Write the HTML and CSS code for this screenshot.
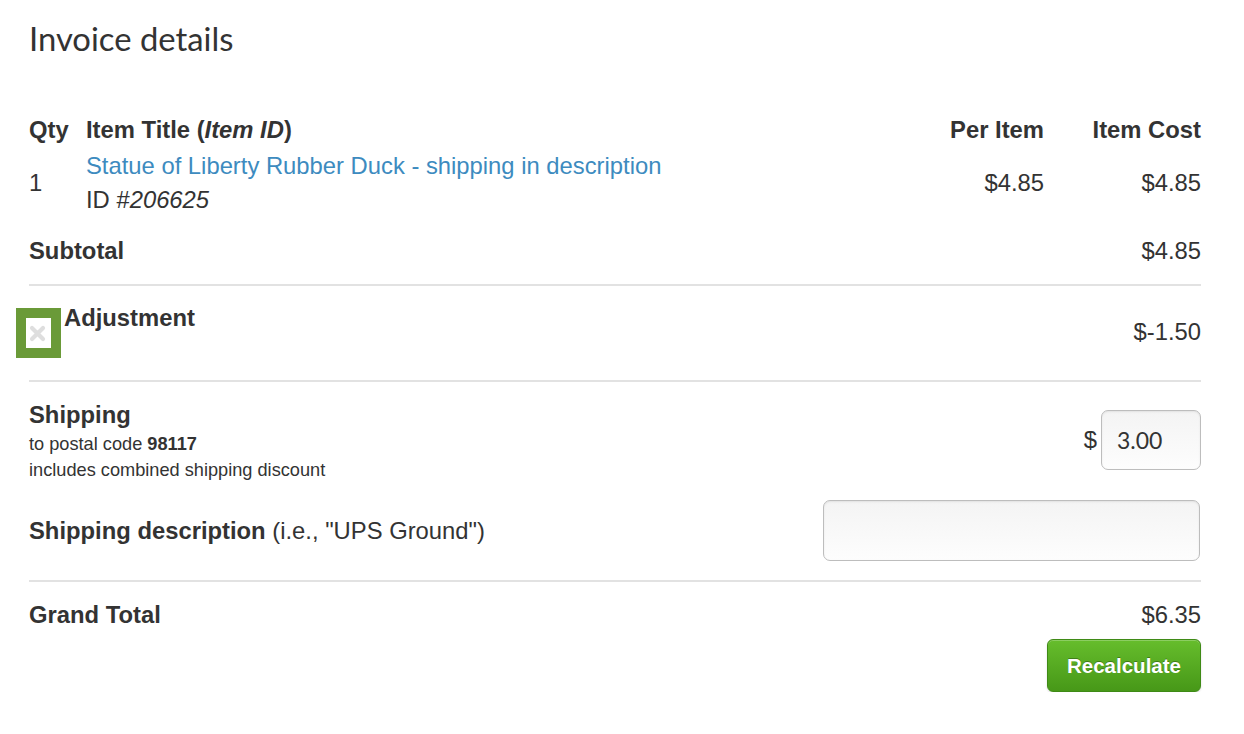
FILE: index.html
```html
<!DOCTYPE html>
<html lang="en">
<head>
<meta charset="utf-8">
<title>Invoice details</title>
<link rel="stylesheet" href="styles.css">
</head>
<body>
<main class="invoice">
  <h1 class="invoice-title">Invoice details</h1>

  <div class="items">
    <div class="cell head">Qty</div>
    <div class="cell head">Item Title (<em>Item ID</em>)</div>
    <div class="cell head num">Per Item</div>
    <div class="cell head num">Item Cost</div>

    <div class="cell line qty">1</div>
    <div class="cell line title">
      <a class="item-link" href="#">Statue of Liberty Rubber Duck - shipping in description</a>
      <div class="item-id">ID #<em>206625</em></div>
    </div>
    <div class="cell line num mid">$4.85</div>
    <div class="cell line num mid">$4.85</div>
  </div>

  <div class="section subtotal">
    <div class="label">Subtotal</div>
    <div class="amount">$4.85</div>
  </div>

  <div class="section adjustment">
    <button class="remove" type="button" aria-label="Remove adjustment">
      <svg width="17" height="17" viewBox="0 0 17 17"><path d="M3 3 L14 14 M14 3 L3 14" stroke="#dedede" stroke-width="4.2" stroke-linecap="round"/></svg>
    </button>
    <div class="label">Adjustment</div>
    <div class="amount adj-amount">$-1.50</div>
  </div>

  <div class="section shipping">
    <div class="ship-row">
      <div class="ship-info">
        <div class="label ship-label">Shipping</div>
        <div class="small">to postal code <strong>98117</strong></div>
        <div class="small">includes combined shipping discount</div>
      </div>
      <div class="ship-cost">
        <span class="currency">$</span>
        <input class="field cost-field" type="text" value="3.00">
      </div>
    </div>
    <div class="desc-row">
      <div><span class="label">Shipping description</span> (i.e., "UPS Ground")</div>
      <input class="field desc-field" type="text">
    </div>
  </div>

  <div class="total">
    <div class="label">Grand Total</div>
    <div class="total-side">
      <div class="amount">$6.35</div>
      <button class="recalc" type="button">Recalculate</button>
    </div>
  </div>
</main>
</body>
</html>
```

FILE: styles.css
```css
html, body {
  margin: 0;
  padding: 0;
  background: #fff;
}

body {
  font-family: "Liberation Sans", Arial, sans-serif;
  font-size: 23.8px;
  line-height: 34px;
  color: #333;
}

.invoice {
  width: 1172px;
  margin-left: 29px;
}

.invoice-title {
  font-family: Lato, "Open Sans", sans-serif;
  font-weight: 400;
  font-size: 32.8px;
  line-height: 40px;
  margin: 19px 0 0;
  color: #333;
}

/* line items */
.items {
  display: grid;
  grid-template-columns: 57px 1fr 160px 157px;
  margin-top: 54px;
}

.cell.head {
  font-weight: 700;
}

.cell.head em {
  font-style: italic;
}

.cell.line {
  padding-top: 2px;
}

.num {
  text-align: right;
}

.qty, .mid {
  align-self: center;
}

.mid {
  margin-top: -1px;
}

.item-link {
  color: #3d8bbf;
  text-decoration: none;
}

.item-id em {
  font-style: italic;
}

/* totals sections */
.section {
  border-bottom: 2px solid #e2e2e2;
}

.label {
  font-weight: 700;
}

.subtotal {
  display: flex;
  justify-content: space-between;
  padding: 17px 0 16px;
}

.adjustment {
  display: flex;
  align-items: flex-start;
  padding: 15px 0 22px;
}

.remove {
  box-sizing: content-box;
  width: 25px;
  height: 30px;
  margin: 7px 3px 0 -13px;
  padding: 0;
  border: 10px solid #6a9a38;
  background: #fff;
  display: flex;
  align-items: center;
  justify-content: center;
}

.remove svg {
  margin-left: -2px;
  margin-top: 1px;
}

.adj-amount {
  margin-left: auto;
  margin-top: 14px;
}

.shipping {
  padding: 17px 0 19px;
}

.ship-row {
  display: flex;
  justify-content: space-between;
  align-items: flex-start;
}

.ship-label {
  line-height: 32px;
}

.small {
  font-size: 18.2px;
  line-height: 26px;
}

.ship-cost {
  display: flex;
  align-items: center;
  margin-top: 11px;
}

.currency {
  margin-right: 4px;
}

.field {
  box-sizing: border-box;
  border: 1px solid #bdbdbd;
  border-radius: 7px;
  background: linear-gradient(#f4f4f4, #fdfdfd);
  box-shadow: inset 0 1px 2px rgba(0, 0, 0, 0.08);
  font-family: Lato, "Open Sans", sans-serif;
  font-size: 23px;
  color: #333;
  outline: none;
}

.cost-field {
  width: 100px;
  height: 60px;
  padding: 0 15px;
}

.desc-row {
  display: flex;
  justify-content: space-between;
  align-items: center;
  margin-top: 17px;
}

.desc-field {
  width: 377px;
  height: 61px;
  margin-right: 1px;
}

/* grand total */
.total {
  display: flex;
  justify-content: space-between;
  align-items: flex-start;
  padding-top: 16px;
}

.total-side {
  display: flex;
  flex-direction: column;
  align-items: flex-end;
}

.recalc {
  margin-top: 7px;
  width: 154px;
  height: 53px;
  border: 1px solid #3f8a16;
  border-radius: 6px;
  background: linear-gradient(#66bd2c, #479818);
  box-shadow: inset 0 1px 0 rgba(255, 255, 255, 0.25), 0 1px 2px rgba(0, 0, 0, 0.15);
  color: #fff;
  font-family: "Liberation Sans", Arial, sans-serif;
  font-weight: 700;
  font-size: 20.5px;
  text-shadow: 0 -1px 0 rgba(0, 0, 0, 0.3);
  padding: 0;
}
```
